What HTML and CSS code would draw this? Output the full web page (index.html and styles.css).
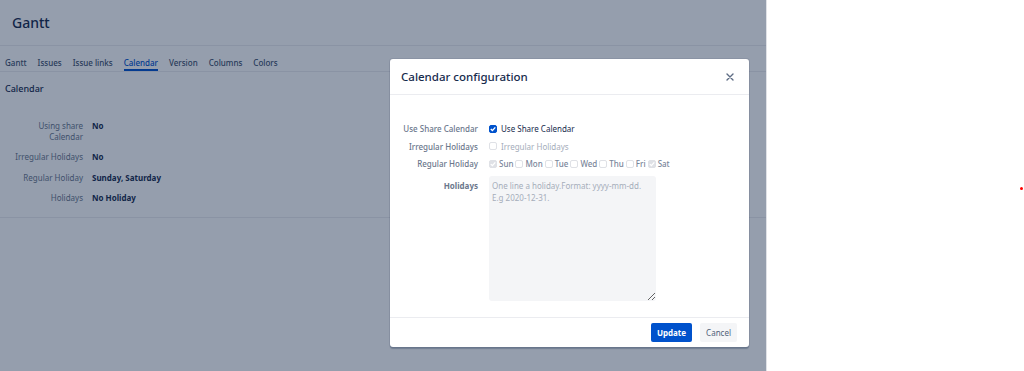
FILE: index.html
```html
<!DOCTYPE html>
<html lang="en">
<head>
    <meta charset="UTF-8">
    <title>Gantt - Calendar configuration</title>
    <link rel="stylesheet" href="styles.css">
</head>
<body>
    <div class="page">
        <div class="page-header">
            <h1 class="page-title">Gantt</h1>
        </div>
        <nav class="tabs">
            <span class="tab">Gantt</span>
            <span class="tab">Issues</span>
            <span class="tab">Issue links</span>
            <span class="tab active">Calendar</span>
            <span class="tab">Version</span>
            <span class="tab">Columns</span>
            <span class="tab">Colors</span>
        </nav>
        <div class="section">
            <h2 class="section-title">Calendar</h2>
            <div class="info">
                <div class="info-row">
                    <span class="info-label">Using share Calendar</span>
                    <span class="info-value">No</span>
                </div>
                <div class="info-row">
                    <span class="info-label">Irregular Holidays</span>
                    <span class="info-value">No</span>
                </div>
                <div class="info-row">
                    <span class="info-label">Regular Holiday</span>
                    <span class="info-value">Sunday, Saturday</span>
                </div>
                <div class="info-row">
                    <span class="info-label">Holidays</span>
                    <span class="info-value">No Holiday</span>
                </div>
            </div>
        </div>

        <div class="blanket"></div>

        <div class="modal">
            <div class="modal-header">
                <h3 class="modal-title">Calendar configuration</h3>
                <svg class="modal-close" width="8" height="8" viewBox="0 0 8 8">
                    <path d="M1 1L7 7M7 1L1 7" stroke="#5e6c84" stroke-width="1.4" stroke-linecap="round"/>
                </svg>
            </div>
            <div class="modal-body">
                <div class="field">
                    <span class="field-label">Use Share Calendar</span>
                    <div class="field-control">
                        <span class="check checked">
                            <svg width="8" height="8" viewBox="0 0 8 8"><path d="M1.8 4.1L3.4 5.6L6.3 2.4" fill="none" stroke="#fff" stroke-width="1.4"/></svg>
                        </span>
                        <span class="check-text">Use Share Calendar</span>
                    </div>
                </div>
                <div class="field">
                    <span class="field-label">Irregular Holidays</span>
                    <div class="field-control">
                        <span class="check disabled"></span>
                        <span class="check-text muted">Irregular Holidays</span>
                    </div>
                </div>
                <div class="field">
                    <span class="field-label">Regular Holiday</span>
                    <div class="field-control days">
                        <span class="check disabled on">
                            <svg width="8" height="8" viewBox="0 0 8 8"><path d="M1.8 4.1L3.4 5.6L6.3 2.4" fill="none" stroke="#fff" stroke-width="1.3"/></svg>
                        </span>
                        <span class="day">Sun</span>
                        <span class="check disabled"></span>
                        <span class="day">Mon</span>
                        <span class="check disabled"></span>
                        <span class="day">Tue</span>
                        <span class="check disabled"></span>
                        <span class="day">Wed</span>
                        <span class="check disabled"></span>
                        <span class="day">Thu</span>
                        <span class="check disabled"></span>
                        <span class="day">Fri</span>
                        <span class="check disabled on">
                            <svg width="8" height="8" viewBox="0 0 8 8"><path d="M1.8 4.1L3.4 5.6L6.3 2.4" fill="none" stroke="#fff" stroke-width="1.3"/></svg>
                        </span>
                        <span class="day">Sat</span>
                    </div>
                </div>
                <div class="field field-top">
                    <span class="field-label strong">Holidays</span>
                    <div class="field-control">
                        <textarea class="holidays" placeholder="One line a holiday.Format: yyyy-mm-dd. E.g 2020-12-31."></textarea>
                    </div>
                </div>
            </div>
            <div class="modal-footer">
                <button class="btn btn-primary">Update</button>
                <button class="btn btn-subtle">Cancel</button>
            </div>
        </div>
    </div>
    <div class="aside">
        <span class="dot"></span>
    </div>
</body>
</html>
```

FILE: styles.css
```css
body, html {
    margin: 0;
    padding: 0;
    height: 100%;
    overflow: hidden;
    font-family: 'Noto Sans', 'Open Sans', sans-serif;
    color: #172b4d;
}
body {
    display: flex;
}
.page {
    position: relative;
    width: 766px;
    height: 100%;
    background: #fff;
    border-right: 1px solid #dfe1e6;
}
.page-header {
    height: 46px;
    display: flex;
    align-items: center;
    padding: 0 0 1px 12px;
    border-bottom: 1px solid #ebecf0;
    box-sizing: border-box;
}
.page-title {
    margin: 0;
    font-size: 14px;
    font-weight: 500;
    color: #172b4d;
}
.tabs {
    display: flex;
    gap: 11px;
    padding: 11px 5px 0;
    border-bottom: 1px solid #ebecf0;
}
.tab {
    font-size: 8px;
    line-height: 11px;
    font-weight: 500;
    color: #42526e;
    padding-bottom: 1px;
    border-bottom: 2px solid transparent;
}
.tab.active {
    color: #0052cc;
    border-bottom-color: #0052cc;
}
.section {
    padding: 11px 5px 9px;
    border-bottom: 1px solid #ebecf0;
}
.section-title {
    margin: 0 0 20px;
    font-size: 9px;
    line-height: 12px;
    font-weight: 500;
    color: #172b4d;
}
.info-row {
    display: flex;
    gap: 9px;
    padding: 4.75px 0;
    font-size: 8px;
    line-height: 11px;
}
.info-label {
    width: 72px;
    margin-left: 6px;
    text-align: right;
    color: #6b778c;
}
.info-value {
    font-weight: 700;
    color: #172b4d;
}
.blanket {
    position: absolute;
    inset: 0;
    background: rgba(9, 30, 66, 0.43);
}
.modal {
    position: absolute;
    left: 390px;
    top: 59px;
    width: 359px;
    background: #fff;
    border-radius: 3px;
    box-shadow: 0 0 0 1px rgba(9, 30, 66, 0.08), 0 2px 1px rgba(9, 30, 66, 0.25);
}
.modal-header {
    height: 36px;
    display: flex;
    align-items: center;
    justify-content: space-between;
    padding: 0 15px 0 11px;
    border-bottom: 1px solid #ebecf0;
    box-sizing: border-box;
}
.modal-title {
    margin: 0;
    font-size: 11.5px;
    font-weight: 500;
    color: #172b4d;
}
.modal-body {
    padding: 25px 11px 16px;
}
.field {
    display: flex;
    align-items: center;
    gap: 11px;
    height: 17.5px;
    font-size: 8px;
}
.field-top {
    align-items: flex-start;
    height: auto;
    margin-top: 3px;
}
.field-label {
    width: 77px;
    flex: none;
    text-align: right;
    color: #6b778c;
    font-weight: 500;
}
.field-label.strong {
    font-weight: 700;
    padding-top: 4px;
}
.field-control {
    display: flex;
    align-items: center;
    gap: 3px;
    color: #172b4d;
}
.days {
    gap: 2px;
}
.check {
    width: 8px;
    height: 8px;
    box-sizing: border-box;
    border: 1px solid #c1c7d0;
    border-radius: 2px;
    background: #fafbfc;
    display: flex;
    align-items: center;
    justify-content: center;
}
.check svg {
    flex: none;
}
.check.checked {
    background: #0052cc;
    border-color: #0052cc;
}
.check.disabled {
    border-color: #dfe1e6;
    background: #fff;
}
.check.disabled.on {
    background: #dfe1e6;
    border-color: #dfe1e6;
}
.check-text {
    margin-left: 1px;
}
.muted {
    color: #a5adba;
}
.day {
    font-weight: 500;
    color: #7a869a;
}
.holidays {
    width: 167px;
    height: 125px;
    box-sizing: border-box;
    border: none;
    border-radius: 3px;
    background: #f4f5f7;
    padding: 4px 3px;
    font-family: inherit;
    font-size: 8px;
    line-height: 12px;
    color: #172b4d;
    resize: both;
}
.holidays::placeholder {
    color: #a5adba;
}
.modal-footer {
    display: flex;
    justify-content: flex-end;
    gap: 8px;
    padding: 5px 12px 5px;
    border-top: 1px solid #ebecf0;
}
.btn {
    height: 19px;
    border: none;
    border-radius: 2px;
    font-family: inherit;
    font-size: 8px;
    padding: 0 6px;
}
.btn-primary {
    background: #0052cc;
    color: #fff;
    font-weight: 700;
}
.btn-subtle {
    background: #f4f5f7;
    color: #505f79;
}
.aside {
    position: relative;
    flex: 1;
}
.dot {
    position: absolute;
    left: 253px;
    top: 187px;
    width: 3px;
    height: 3px;
    border-radius: 50%;
    background: #f00;
}
```
